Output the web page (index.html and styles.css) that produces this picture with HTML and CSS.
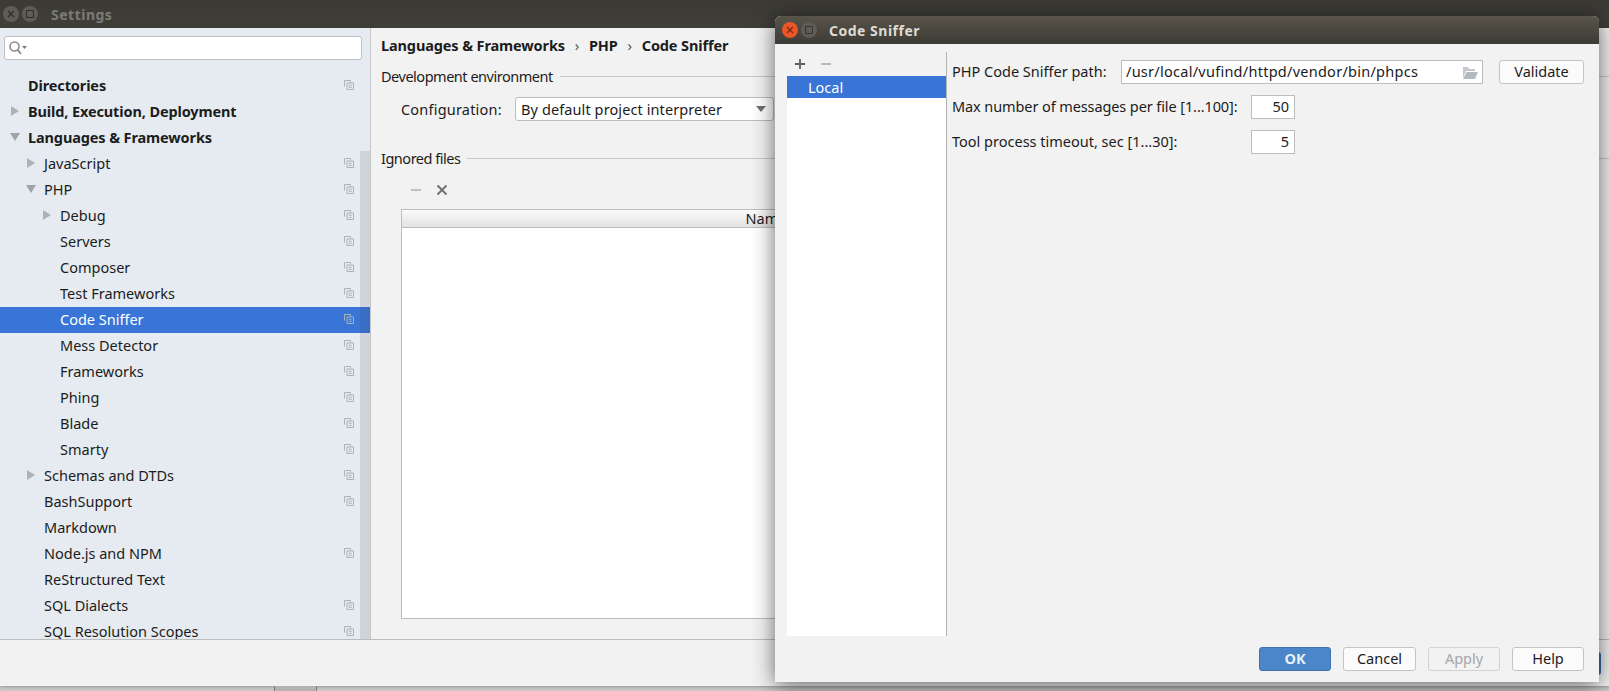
FILE: index.html
```html
<!DOCTYPE html>
<html lang="en">
<head>
    <meta charset="UTF-8">
    <title>Settings</title>
    <link rel="stylesheet" href="styles.css">
</head>
<body>
    <svg class="defs" width="0" height="0">
        <symbol id="copy" viewBox="0 0 10 10">
            <path d="M.5 6.5V.5h6v2M3 3h6.5v6.5H3zM4.7 5.3h3M4.7 7.3h3" fill="none" stroke="currentColor" stroke-width="1"/>
        </symbol>
    </svg>

    <!-- Settings window -->
    <div class="settings">
        <div class="titlebar">
            <span class="winbtn"><svg width="8" height="8" viewBox="0 0 8 8"><path d="M1 1l6 6M7 1L1 7" stroke="#2e2d29" stroke-width="1.2"/></svg></span>
            <span class="winbtn"><svg width="8" height="8" viewBox="0 0 8 8"><path d="M.5.5h7v7h-7z" fill="none" stroke="#2e2d29"/></svg></span>
            <span class="titlebar-text dim">Settings</span>
        </div>
        <div class="settings-body">
            <div class="sidebar">
                <div class="search">
                    <svg width="18" height="14" viewBox="0 0 18 14"><circle cx="5.500" cy="5.500" r="4.500" fill="none" stroke="#8d8d8d" stroke-width="1.6"/><path d="M8.500 8.500l3.500 4.500" stroke="#8d8d8d" stroke-width="2"/><path d="M13 5h5l-2.500 3z" fill="#7a7a7a"/></svg>
                </div>
                <div class="tree">
                    <div class="row bold l0">Directories<svg class="copy"><use href="#copy"/></svg></div>
                    <div class="row bold l0"><span class="arrow right"></span>Build, Execution, Deployment</div>
                    <div class="row bold l0"><span class="arrow down"></span>Languages &amp; Frameworks</div>
                    <div class="row l1"><span class="arrow right"></span>JavaScript<svg class="copy"><use href="#copy"/></svg></div>
                    <div class="row l1"><span class="arrow down"></span>PHP<svg class="copy"><use href="#copy"/></svg></div>
                    <div class="row l2"><span class="arrow right"></span>Debug<svg class="copy"><use href="#copy"/></svg></div>
                    <div class="row l2">Servers<svg class="copy"><use href="#copy"/></svg></div>
                    <div class="row l2">Composer<svg class="copy"><use href="#copy"/></svg></div>
                    <div class="row l2">Test Frameworks<svg class="copy"><use href="#copy"/></svg></div>
                    <div class="row l2 selected">Code Sniffer<svg class="copy"><use href="#copy"/></svg></div>
                    <div class="row l2">Mess Detector<svg class="copy"><use href="#copy"/></svg></div>
                    <div class="row l2">Frameworks<svg class="copy"><use href="#copy"/></svg></div>
                    <div class="row l2">Phing<svg class="copy"><use href="#copy"/></svg></div>
                    <div class="row l2">Blade<svg class="copy"><use href="#copy"/></svg></div>
                    <div class="row l2">Smarty<svg class="copy"><use href="#copy"/></svg></div>
                    <div class="row l1"><span class="arrow right"></span>Schemas and DTDs<svg class="copy"><use href="#copy"/></svg></div>
                    <div class="row l1">BashSupport<svg class="copy"><use href="#copy"/></svg></div>
                    <div class="row l1">Markdown</div>
                    <div class="row l1">Node.js and NPM<svg class="copy"><use href="#copy"/></svg></div>
                    <div class="row l1">ReStructured Text</div>
                    <div class="row l1">SQL Dialects<svg class="copy"><use href="#copy"/></svg></div>
                    <div class="row l1">SQL Resolution Scopes<svg class="copy"><use href="#copy"/></svg></div>
                </div>
                <div class="scrollbar"></div>
            </div>
            <div class="content">
                <div class="crumbs">
                    <b>Languages &amp; Frameworks</b><span class="sep">›</span><b>PHP</b><span class="sep">›</span><b>Code Sniffer</b>
                    <svg class="copy crumb-copy"><use href="#copy"/></svg>
                </div>
                <div class="group">Development environment<span class="group-line"></span></div>
                <div class="config">
                    <span class="config-label">Configuration:</span>
                    <div class="combo">By default project interpreter<span class="combo-arrow"></span></div>
                </div>
                <div class="group ignored">Ignored files<span class="group-line"></span></div>
                <div class="table-tools">
                    <svg width="14" height="14" viewBox="0 0 14 14"><path d="M2 7h10" stroke="#b4b4b4" stroke-width="1.6"/></svg>
                    <svg width="14" height="14" viewBox="0 0 14 14"><path d="M2.500 2.500l9 9M11.500 2.500l-9 9" stroke="#6e6e6e" stroke-width="1.800"/></svg>
                </div>
                <div class="table">
                    <div class="table-head">Name</div>
                </div>
            </div>
        </div>
        <div class="settings-footer">
            <div class="back-btn"></div>
        </div>
    </div>
    <div class="taskbar-piece"></div>

    <!-- Code Sniffer dialog -->
    <div class="dialog">
        <div class="titlebar dialog-title">
            <span class="winbtn close"><svg width="8" height="8" viewBox="0 0 8 8"><path d="M1 1l6 6M7 1L1 7" stroke="#7a2a10" stroke-width="1.2"/></svg></span>
            <span class="winbtn"><svg width="8" height="8" viewBox="0 0 8 8"><path d="M.5.5h7v7h-7z" fill="none" stroke="#35342f"/></svg></span>
            <span class="titlebar-text">Code Sniffer</span>
        </div>
        <div class="dialog-main">
            <div class="left-pane">
                <div class="list-tools">
                    <svg width="12" height="12" viewBox="0 0 12 12"><path d="M6 1v10M1 6h10" stroke="#5f5f5f" stroke-width="1.800"/></svg>
                    <svg width="12" height="12" viewBox="0 0 12 12"><path d="M1 6h10" stroke="#b4b4b4" stroke-width="1.800"/></svg>
                </div>
                <div class="list">
                    <div class="list-item">Local</div>
                </div>
            </div>
            <div class="form">
                <div class="form-row">
                    <span class="lbl lbl-path">PHP Code Sniffer path:</span>
                    <div class="field field-path">/usr/local/vufind/httpd/vendor/bin/phpcs
                        <svg class="folder" width="16" height="12" viewBox="0 0 16 12"><path d="M1 0h5l1 2h6v2H4L1 11z" fill="#c2c8cd"/><path d="M4.500 5H16l-3 7H1z" fill="#b3bac0"/></svg>
                    </div>
                    <div class="btn validate">Validate</div>
                </div>
                <div class="form-row">
                    <span class="lbl lbl-num lbl-max">Max number of messages per file [1...100]:</span>
                    <div class="field field-num">50</div>
                </div>
                <div class="form-row">
                    <span class="lbl lbl-num">Tool process timeout, sec [1...30]:</span>
                    <div class="field field-num">5</div>
                </div>
            </div>
        </div>
        <div class="dialog-footer">
            <div class="btn primary">OK</div>
            <div class="btn cancel">Cancel</div>
            <div class="btn disabled">Apply</div>
            <div class="btn">Help</div>
        </div>
    </div>
</body>
</html>
```

FILE: styles.css
```css
* {
    box-sizing: border-box;
}

body {
    margin: 0;
    width: 1609px;
    height: 691px;
    overflow: hidden;
    position: relative;
    background: #c9c9c9;
    font-family: "Noto Sans", sans-serif;
    font-size: 14.5px;
    color: #1c1c1c;
}

.defs {
    position: absolute;
}

/* Window title bars */
.titlebar {
    height: 28px;
    background: linear-gradient(#3b3a35, #3f3e39);
    display: flex;
    align-items: center;
    padding-left: 3px;
    gap: 3px;
}

.titlebar-text {
    margin-left: 9px;
    font-weight: 700;
    font-size: 14px;
    letter-spacing: .5px;
    color: #dfdbd2;
}

.titlebar-text.dim {
    margin-left: 10px;
    color: #7d7b75;
}

.winbtn {
    width: 16px;
    height: 16px;
    border-radius: 50%;
    background: #5e5c57;
    display: flex;
    align-items: center;
    justify-content: center;
}

/* Settings */
.settings {
    height: 686px;
    display: flex;
    flex-direction: column;
    background: #f2f2f2;
    box-shadow: 0 1px 3px rgba(0, 0, 0, .25);
}

.settings-body {
    height: 611px;
    display: flex;
}

.sidebar {
    width: 371px;
    flex: none;
    position: relative;
    background: #e5ebf0;
    border-right: 1px solid #c4c8cb;
    overflow: hidden;
}

.search {
    margin: 8px 8px 0 4px;
    height: 24px;
    background: #fff;
    border: 1px solid #bfbfbf;
    border-radius: 3px;
    display: flex;
    align-items: center;
    padding-left: 4px;
}

.tree {
    margin-top: 13px;
}

.row {
    height: 26px;
    padding-bottom: 2px;
    display: flex;
    align-items: center;
    position: relative;
    white-space: nowrap;
}

.row.bold {
    font-weight: 700;
    letter-spacing: -.12px;
}

.l0 {
    padding-left: 28px;
}

.l1 {
    padding-left: 44px;
}

.l2 {
    padding-left: 60px;
}

.row.selected {
    background: #3875d7;
    color: #fff;
}

.arrow {
    position: absolute;
    width: 0;
    height: 0;
}

.arrow.right {
    margin-left: -17px;
    border-left: 8px solid #aeb2b5;
    border-top: 5px solid transparent;
    border-bottom: 5px solid transparent;
}

.arrow.down {
    margin-left: -18px;
    border-top: 8px solid #a0a4a7;
    border-left: 5px solid transparent;
    border-right: 5px solid transparent;
}

.copy {
    position: absolute;
    left: 344px;
    top: 7px;
    width: 10px;
    height: 10px;
    color: #a8b3ba;
}

.scrollbar {
    position: absolute;
    right: 0;
    top: 123px;
    bottom: 0;
    width: 10px;
    background: rgba(60, 60, 60, .13);
}

.content {
    flex: 1;
    min-width: 0;
    padding-left: 10px;
}

.crumbs {
    height: 34px;
    display: flex;
    align-items: center;
    position: relative;
}

.crumbs b {
    font-weight: 700;
    letter-spacing: -.12px;
}

.sep {
    width: 24px;
    text-align: center;
    color: #555;
}

.crumb-copy {
    left: 402px;
    top: 12px;
}

.group {
    margin-top: 3px;
    height: 22px;
    display: flex;
    align-items: center;
    letter-spacing: -.48px;
}

.group-line {
    flex: 1;
    height: 1px;
    margin-left: 7px;
    background: #c8c8c8;
}

.config {
    margin: 10px 0 0 20px;
    display: flex;
    align-items: center;
    height: 24px;
}

.config-label {
    width: 114px;
    letter-spacing: .2px;
}

.combo {
    width: 259px;
    height: 24px;
    background: #fff;
    border: 1px solid #bdbdbd;
    border-radius: 3px;
    padding-left: 5px;
    letter-spacing: .1px;
    display: flex;
    align-items: center;
    position: relative;
}

.combo-arrow {
    position: absolute;
    right: 7px;
    top: 8px;
    border-top: 6px solid #6f6f6f;
    border-left: 5px solid transparent;
    border-right: 5px solid transparent;
}

.group.ignored {
    margin-top: 26px;
}

.table-tools {
    margin: 14px 0 0 28px;
    height: 14px;
    display: flex;
    gap: 12px;
}

.table {
    margin: 12px 0 0 20px;
    width: 730px;
    height: 410px;
    background: #fff;
    border: 1px solid #bdbdbd;
}

.table-head {
    height: 18px;
    line-height: 17px;
    text-align: center;
    background: linear-gradient(#fbfbfb, #e2e2e2);
    border-bottom: 1px solid #bdbdbd;
}

.settings-footer {
    flex: 1;
    border-top: 1px solid #bdbdbd;
    display: flex;
    justify-content: flex-end;
    align-items: flex-start;
    padding: 12px 8px 0 0;
}

.back-btn {
    width: 72px;
    height: 23px;
    background: #3c6ea8;
    border-radius: 3px;
}

.taskbar-piece {
    position: absolute;
    left: 274px;
    top: 686px;
    width: 43px;
    height: 5px;
    background: #b2b2b2;
    border-left: 1px solid #7d7d7d;
    border-right: 1px solid #7d7d7d;
}

/* Code Sniffer dialog */
.dialog {
    position: absolute;
    left: 775px;
    top: 16px;
    width: 824px;
    height: 666px;
    background: #f2f2f2;
    border-radius: 6px 6px 0 0;
    box-shadow: 0 3px 22px rgba(0, 0, 0, .6);
    display: flex;
    flex-direction: column;
}

.dialog-title {
    background: linear-gradient(#585449, #3c3b35);
    border-radius: 6px 6px 0 0;
    padding-left: 7px;
}

.winbtn.close {
    background: #e9562a;
}

.dialog-main {
    height: 592px;
    display: flex;
    padding: 8px 0 0 12px;
}

.left-pane {
    width: 160px;
    flex: none;
    display: flex;
    flex-direction: column;
    border-right: 1px solid #b4b4b4;
}

.list-tools {
    height: 24px;
    display: flex;
    align-items: center;
    padding-left: 7px;
    gap: 14px;
}

.list {
    flex: 1;
    background: #fff;
}

.list-item {
    height: 22px;
    line-height: 22px;
    padding-left: 21px;
    background: #3875d7;
    color: #fff;
}

.form {
    flex: 1;
    padding: 8px 0 0 5px;
    display: flex;
    flex-direction: column;
    gap: 11px;
}

.form-row {
    display: flex;
    align-items: center;
    height: 24px;
}

.lbl {
    flex: none;
    white-space: nowrap;
    padding-bottom: 2px;
}

.lbl-path {
    width: 169px;
}

.lbl-num {
    width: 299px;
}

.lbl-max {
    letter-spacing: -.1px;
}

.field {
    height: 24px;
    background: #fff;
    border: 1px solid #bdbdbd;
    padding-bottom: 2px;
    display: flex;
    align-items: center;
}

.field-path {
    width: 362px;
    padding-left: 4px;
    letter-spacing: .26px;
    position: relative;
}

.folder {
    position: absolute;
    right: 4px;
    top: 6px;
}

.field-num {
    width: 44px;
    justify-content: flex-end;
    padding-right: 5px;
}

.btn {
    width: 72px;
    height: 24px;
    padding-bottom: 2px;
    background: #fbfbfb;
    border: 1px solid #c4c4c4;
    border-radius: 3px;
    display: flex;
    align-items: center;
    justify-content: center;
}

.btn.cancel {
    width: 73px;
}

.validate {
    width: 85px;
    margin-left: 16px;
}

.dialog-footer {
    flex: 1;
    display: flex;
    justify-content: flex-end;
    gap: 12px;
    padding: 11px 15px 0 0;
}

.btn.primary {
    background: #4a86c8;
    border-color: #3f74b0;
    color: #e8f0f8;
    font-weight: 700;
}

.btn.disabled {
    background: #f2f2f2;
    border-color: #d2d2d2;
    color: #a6a6a6;
}
```
